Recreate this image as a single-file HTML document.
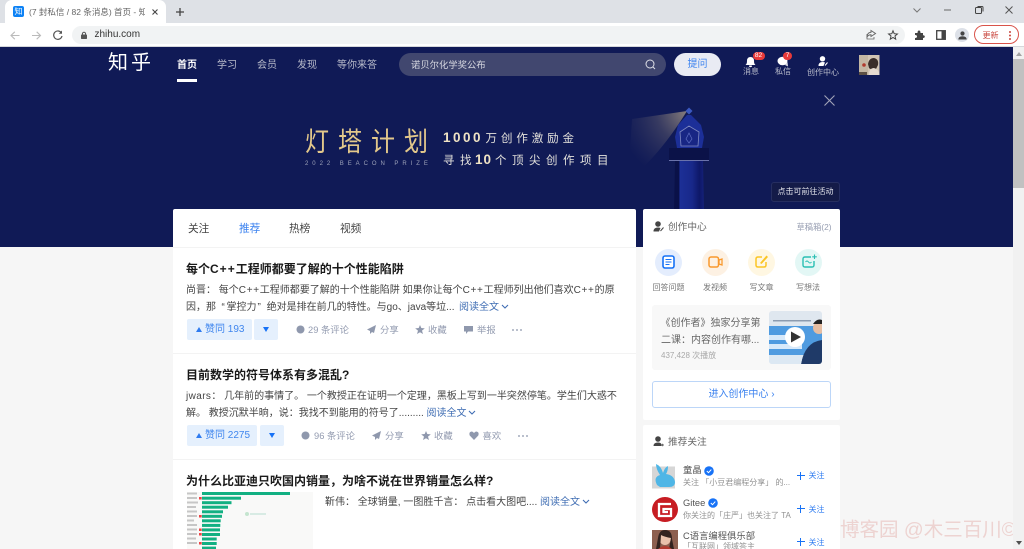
<!DOCTYPE html>
<html lang="zh"><head><meta charset="utf-8"><title>知乎</title>
<style>
*{box-sizing:border-box;margin:0;padding:0}
html,body{width:1024px;height:549px;overflow:hidden;background:#f6f6f6}
body{position:relative;font-family:"Liberation Sans","Noto Sans CJK SC",sans-serif;color:#444}
#w{position:absolute;left:0;top:0;width:1024px;height:549px;overflow:hidden;filter:blur(.3px)}
.a{position:absolute;white-space:nowrap}
svg{position:absolute;overflow:visible}
.nav{top:58px;font-size:10px;line-height:15px;color:#b9bccb}
.tab{top:222px;font-size:10.67px;line-height:15px;color:#444}
.t{font-size:12px;font-weight:700;color:#1a1a1a;line-height:18px;left:186px}
.t i{font-style:normal;letter-spacing:1px}
.p{font-size:10px;color:#444;line-height:18px}
.p i{font-style:normal;letter-spacing:.7px}
.blue{color:#3f6db3;font-size:10px;line-height:18px}
.vote{background:#e5f0fd;border-radius:2px;height:21px}
.vt{color:#3f86ee;font-size:10px;line-height:15px}
.act{font-size:9.33px;color:#939bb0;line-height:14px}
.ic{font-size:8px;color:#777;line-height:12px;text-align:center;width:40px}
.fo{font-size:8px;color:#2e7bf0;line-height:12px;left:808.500px}
.plus{left:797px;width:8px;height:8px;background:linear-gradient(#1772f6,#1772f6) center/8px 1.300px no-repeat,linear-gradient(#1772f6,#1772f6) center/1.300px 8px no-repeat}
.dots{width:2px;height:2px;border-radius:50%;background:#a5acbd;box-shadow:4px 0 #a5acbd,8px 0 #a5acbd}
</style></head><body><div id="w">
<!-- browser chrome -->
<div class="a" style="left:0;top:0;width:1024px;height:23px;background:#dee1e6"></div>
<div class="a" style="left:5px;top:0;width:161px;height:23px;background:#fff;border-radius:7px 7px 0 0"></div>
<div class="a" style="left:13px;top:6px;width:11px;height:11px;background:#0d82f5;border-radius:2px;color:#fff;font-size:8px;line-height:11px;text-align:center">知</div>
<div class="a" style="left:29px;top:5.500px;width:116px;overflow:hidden;font-size:8.500px;line-height:13px;color:#666">(7 封私信 / 82 条消息) 首页 - 知乎</div>
<svg style="left:152px;top:9px" width="6" height="6"><path d="M.5 .5L5.500 5.500M5.500 .5L.5 5.500" stroke="#444" stroke-width="1.100"/></svg>
<svg style="left:176px;top:8px" width="8" height="8"><path d="M4 0V8M0 4H8" stroke="#444" stroke-width="1.300"/></svg>
<svg style="left:913px;top:8px" width="8" height="5"><path d="M.5 .5L4 4L7.500 .5" stroke="#777" fill="none"/></svg>
<svg style="left:944px;top:9px" width="8" height="2"><path d="M0 1H7" stroke="#666" stroke-width="1"/></svg>
<svg style="left:974.500px;top:6px" width="9" height="9"><rect x=".5" y="1.500" width="6" height="6" rx="1" fill="none" stroke="#444"/><path d="M2.500 .5H7Q8 .5 8 1.500V5.500" fill="none" stroke="#444"/></svg>
<svg style="left:1005px;top:6px" width="8" height="8"><path d="M.5 .5L7.500 7.500M7.500 .5L.5 7.500" stroke="#555" stroke-width="1"/></svg>
<div class="a" style="left:0;top:23px;width:1024px;height:24px;background:#fff"></div>
<svg style="left:10px;top:30.500px" width="10" height="10"><path d="M9.500 4.500H1M4.800 .8L1 4.500L4.800 8.200" stroke="#bbb" stroke-width="1.100" fill="none"/></svg>
<svg style="left:32px;top:30.500px" width="10" height="10"><path d="M0 4.500H8.500M4.700 .8L8.500 4.500L4.700 8.200" stroke="#bbb" stroke-width="1.100" fill="none"/></svg>
<svg style="left:53px;top:30px" width="10" height="10"><path d="M8.500 3A4.200 4.200 0 1 0 9 6" stroke="#555" stroke-width="1.200" fill="none"/><path d="M9 .5V3.800H5.700Z" fill="#555"/></svg>
<div class="a" style="left:72px;top:26px;width:833px;height:18px;border-radius:9px;background:#f1f3f4"></div>
<svg style="left:81px;top:31.500px" width="6" height="7"><rect y="2.500" width="6" height="4.500" rx=".8" fill="#555"/><path d="M1.400 3V1.800A1.600 1.600 0 0 1 4.600 1.800V3" stroke="#555" fill="none"/></svg>
<div class="a" style="left:94.500px;top:28px;font-size:10px;line-height:14px;color:#333">zhihu.com</div>
<svg style="left:866px;top:30px" width="10" height="10"><path d="M5 .5L9.500 3.500L5 6.500V4.800Q2.500 4.800 1 7Q1 2.500 5 2.200Z" fill="none" stroke="#666"/><path d="M1 4V9H8V7" fill="none" stroke="#666" stroke-width=".8"/></svg>
<svg style="left:888px;top:30px" width="10" height="10"><path d="M5 .8L6.200 3.700L9.400 4L7 6L7.700 9.200L5 7.500L2.300 9.200L3 6L.6 4L3.800 3.700Z" fill="none" stroke="#444" stroke-width="1"/></svg>
<svg style="left:914px;top:30px" width="11" height="10"><path d="M1 3H3.500Q3.500 .5 5 .5Q6.500 .5 6.500 3H9V5.200Q10.800 5.200 10.800 6.500Q10.800 8 9 8V10H1V8Q3 8 3 6.500Q3 5 1 5Z" fill="#444"/></svg>
<svg style="left:936px;top:30px" width="10" height="10"><rect x=".7" y=".7" width="8.600" height="8.600" fill="none" stroke="#444" stroke-width="1.300"/><rect x="5.500" y="1" width="4" height="8" fill="#444"/></svg>
<div class="a" style="left:955px;top:28px;width:14px;height:14px;border-radius:50%;background:#dde1e8"></div>
<svg style="left:957.500px;top:30.500px" width="9" height="9"><circle cx="4.500" cy="2.500" r="2.100" fill="#444"/><path d="M.3 8.500Q.3 5.200 4.500 5.200Q8.700 5.200 8.700 8.500Z" fill="#444"/></svg>
<div class="a" style="left:974px;top:25px;width:45px;height:19px;border:1px solid #d9534a;border-radius:10px;background:#fff"></div>
<div class="a" style="left:982.500px;top:28.500px;font-size:8px;line-height:13px;color:#c9453c">更新</div>
<div class="a" style="left:1008.500px;top:31px;width:2px;height:2px;background:#c9453c;border-radius:50%;box-shadow:0 3.500px #c9453c,0 7px #c9453c"></div>
<div class="a" style="left:0;top:46px;width:1024px;height:1px;background:#d5d7db"></div>
<!-- navy -->
<div class="a" style="left:0;top:47px;width:1013px;height:200px;background:#101a56"></div>
<div class="a" style="left:108px;top:50px;font-size:20px;line-height:27px;letter-spacing:3px;color:#fff">知乎</div>
<div class="a" style="left:177px;top:58px;font-size:10px;line-height:15px;font-weight:700;color:#fff">首页</div>
<div class="a" style="left:177px;top:79px;width:20px;height:3px;background:#fff"></div>
<div class="a nav" style="left:217px">学习</div>
<div class="a nav" style="left:257px">会员</div>
<div class="a nav" style="left:297px">发现</div>
<div class="a nav" style="left:337px">等你来答</div>
<div class="a" style="left:399px;top:53px;width:267px;height:23px;border-radius:12px;background:#41476f"></div>
<div class="a" style="left:411px;top:58px;font-size:9.330px;line-height:14px;color:#d8d9e2">诺贝尔化学奖公布</div>
<svg style="left:645px;top:59px" width="11" height="11"><circle cx="5" cy="5" r="4" fill="none" stroke="#dfe0e7" stroke-width="1"/><path d="M8 8L10 10" stroke="#dfe0e7"/></svg>
<div class="a" style="left:674px;top:53px;width:47px;height:23px;border-radius:12px;background:#e9ebf3;color:#3b82ef;font-size:10px;line-height:23px;text-align:center">提问</div>
<svg style="left:745px;top:56px" width="11" height="11"><path d="M.5 9Q2 8 2 5Q2 1 5.500 1Q9 1 9 5Q9 8 10.500 9Z" fill="#fff"/><rect x="4" y="9.500" width="3" height="1.500" rx=".7" fill="#fff"/></svg>
<div class="a" style="left:752.500px;top:52px;width:12px;height:8px;border-radius:4px;background:#e83a3a;color:#fff;font-size:6.500px;line-height:8px;text-align:center">82</div>
<div class="a" style="left:743px;top:66px;font-size:8px;line-height:12px;color:#b9bccb">消息</div>
<svg style="left:777px;top:56px" width="13" height="11"><ellipse cx="5.500" cy="5" rx="5" ry="4.300" fill="#fff"/><path d="M8 9L11 10.500L10.500 6" fill="#dfe0e7"/></svg>
<div class="a" style="left:783px;top:52px;width:9px;height:8px;border-radius:4px;background:#e83a3a;color:#fff;font-size:6.500px;line-height:8px;text-align:center">7</div>
<div class="a" style="left:775px;top:66px;font-size:8px;line-height:12px;color:#b9bccb">私信</div>
<svg style="left:818px;top:56px" width="10" height="10"><circle cx="4.500" cy="2.800" r="2.700" fill="#fff"/><path d="M.5 10Q.5 6 4.500 6Q6 6 7 6.500L5.500 10Z" fill="#fff"/><path d="M7 9.500L9.500 6.500" stroke="#fff"/></svg>
<div class="a" style="left:807px;top:67px;font-size:8px;line-height:12px;color:#b9bccb">创作中心</div>
<svg style="left:858.500px;top:55px" width="20.500" height="20"><rect width="20.500" height="20" fill="#d2c5b4"/><rect width="9" height="20" fill="#c3b6a3"/><path d="M9 9Q10 3 15 3Q20 4 19 10L17 14Q12 15 10 13Z" fill="#3a2d29"/><path d="M10 20Q10 13 15 13Q20 14 20.500 20Z" fill="#e6dbd0"/><circle cx="5" cy="10" r="1.800" fill="#b03a2e"/><rect y="17" width="8" height="3" fill="#5d5044"/></svg>
<svg style="left:824px;top:95px" width="11" height="11"><path d="M.5 .5L10.500 10.500M10.500 .5L.5 10.500" stroke="#a2a5b9" stroke-width="1.100"/></svg>
<!-- banner -->
<div class="a" style="left:305px;top:128px;font-size:24px;line-height:30px;letter-spacing:9px;color:#e3c88b;transform:scaleY(1.120);transform-origin:0 50%">灯塔计划</div>
<div class="a" style="left:305px;top:160px;font-size:6px;line-height:9px;letter-spacing:3.950px;color:#9ca1b8">2022 BEACON PRIZE</div>
<div class="a" style="left:443px;top:129px;font-size:11.500px;line-height:18px;letter-spacing:3.900px;color:#e4e2dc"><b style="font-size:13.500px;letter-spacing:2.500px;color:#f0e3c4;margin-right:2.500px">1000</b>万创作激励金</div>
<div class="a" style="left:443px;top:151px;font-size:11.500px;line-height:18px;letter-spacing:5.500px;color:#e4e2dc">寻找<b style="font-size:13.500px;letter-spacing:1px;color:#f0e3c4;margin:0 3px 0 -2px">10</b>个顶尖创作项目</div>
<svg style="left:620px;top:105px" width="100" height="105">
<defs><radialGradient id="g1" gradientUnits="userSpaceOnUse" cx="68" cy="7" r="70"><stop offset="0" stop-color="#a89a88" stop-opacity=".8"/><stop offset=".45" stop-color="#8a7f78" stop-opacity=".32"/><stop offset="1" stop-color="#5a5668" stop-opacity="0"/></radialGradient>
<linearGradient id="g2" x1="0" x2="1"><stop offset="0" stop-color="#0a1148"/><stop offset=".16" stop-color="#0a1148"/><stop offset=".2" stop-color="#1c2f96"/><stop offset=".6" stop-color="#18288a"/><stop offset=".85" stop-color="#0e1868"/><stop offset="1" stop-color="#15227a"/></linearGradient></defs>
<path d="M67 6L12 14L8 76Q40 50 67 6Z" fill="url(#g1)"/>
<path d="M69 2.500L72.500 6L69 9.500L65.500 6Z" fill="#3a58c0"/>
<path d="M67 10L58 20L55 32L57 43H82L84 32L81 20L71 10Z" fill="#1c2f98"/>
<path d="M69 21L60 27L61 41H78L79 27Z" fill="#182684" stroke="#7f89c0" stroke-width=".8"/>
<path d="M69 28L66 34L69 38L72 34Z" fill="none" stroke="#5c6cc0" stroke-width=".7"/>
<rect x="49" y="43" width="40" height="12" fill="#0b1248"/>
<rect x="49" y="55" width="40" height="1" fill="#6a72ab"/>
<path d="M55 56H83L84 105H54Z" fill="url(#g2)"/>
</svg>
<div class="a" style="left:771px;top:182px;width:69px;height:20px;border-radius:3px;background:#141b48;border:1px solid #262e60;color:#e2e3ea;font-size:8px;line-height:18px;text-align:center">点击可前往活动</div>
<!-- main card -->
<div class="a" style="left:173px;top:209px;width:463px;height:340px;background:#fff;border-radius:2px 2px 0 0"></div>
<div class="a" style="left:173px;top:247px;width:463px;height:1px;background:#f3f3f3"></div>
<div class="a tab" style="left:188px">关注</div>
<div class="a tab" style="left:239px;color:#3b82ef">推荐</div>
<div class="a tab" style="left:289px">热榜</div>
<div class="a tab" style="left:340px">视频</div>
<div class="a t" style="top:260px">每个<i>C++</i>工程师都要了解的十个性能陷阱</div>
<div class="a p" style="left:186px;top:282px">尚晋： 每个<i>C++</i>工程师都要了解的十个性能陷阱 如果你让每个<i>C++</i>工程师列出他们喜欢<i>C++</i>的原</div>
<div class="a p" style="left:186px;top:299px">因，那</div>
<div class="a p" style="left:221.500px;top:299px">“</div>
<div class="a p" style="left:226.500px;top:299px">掌控力</div>
<div class="a p" style="left:257.500px;top:299px">”</div>
<div class="a p" style="left:266.700px;top:299px">绝对是排在前几的特性。与go、java等垃...</div>
<div class="a blue" style="left:459px;top:299px">阅读全文</div>
<svg style="left:500.500px;top:303.500px" width="8" height="6"><path d="M1 1L4 4L7 1" stroke="#3f6db3" stroke-width="1.100" fill="none"/></svg>
<div class="a vote" style="left:187px;top:319px;width:65px"></div>
<svg style="left:196px;top:326.500px" width="6" height="5"><path d="M3 0L6 5H0Z" fill="#2e7bf0"/></svg>
<div class="a vt" style="left:205px;top:322px">赞同 193</div>
<div class="a vote" style="left:254px;top:319px;width:24px"></div>
<svg style="left:263px;top:327px" width="6" height="5"><path d="M0 0H6L3 5Z" fill="#1772f6"/></svg>
<svg style="left:295.500px;top:325px" width="9" height="9"><circle cx="4.500" cy="4.500" r="4" fill="#8f98ad"/></svg>
<div class="a act" style="left:308px;top:323px">29 条评论</div>
<svg style="left:367px;top:325px" width="9" height="9"><path d="M9 0L0 4.500L3 6L3 9L5 7L7 8Z" fill="#8f98ad"/></svg>
<div class="a act" style="left:380px;top:323px">分享</div>
<svg style="left:415px;top:325px" width="10" height="9"><path d="M5 0L6.300 3L9.800 3.400L7 5.600L8 9L5 7.300L2 9L3 5.600L.2 3.400L3.700 3Z" fill="#8f98ad"/></svg>
<div class="a act" style="left:428px;top:323px">收藏</div>
<svg style="left:464px;top:325px" width="9" height="9"><path d="M0 1H9V6.500H4L2 9V6.500H0Z" fill="#8f98ad"/></svg>
<div class="a act" style="left:477px;top:323px">举报</div>
<div class="a dots" style="left:512px;top:328.500px"></div>
<div class="a" style="left:173px;top:353px;width:463px;height:1px;background:#f3f3f3"></div>
<div class="a t" style="top:366px">目前数学的符号体系有多混乱?</div>
<div class="a p" style="left:186px;top:388px"><span style="letter-spacing:.4px">jwars</span>： 几年前的事情了。 一个教授正在证明一个定理，黑板上写到一半突然停笔。学生们大惑不</div>
<div class="a p" style="left:186px;top:405px">解。 教授沉默半晌，说：我找不到能用的符号了.........</div>
<div class="a blue" style="left:426.500px;top:405px">阅读全文</div>
<svg style="left:467.500px;top:409.500px" width="8" height="6"><path d="M1 1L4 4L7 1" stroke="#3f6db3" stroke-width="1.100" fill="none"/></svg>
<div class="a vote" style="left:187px;top:425px;width:70px"></div>
<svg style="left:196px;top:432.500px" width="6" height="5"><path d="M3 0L6 5H0Z" fill="#2e7bf0"/></svg>
<div class="a vt" style="left:205px;top:428px">赞同 2275</div>
<div class="a vote" style="left:260px;top:425px;width:24px"></div>
<svg style="left:269px;top:433px" width="6" height="5"><path d="M0 0H6L3 5Z" fill="#1772f6"/></svg>
<svg style="left:300.500px;top:431px" width="9" height="9"><circle cx="4.500" cy="4.500" r="4" fill="#8f98ad"/></svg>
<div class="a act" style="left:314px;top:429px">96 条评论</div>
<svg style="left:372px;top:431px" width="9" height="9"><path d="M9 0L0 4.500L3 6L3 9L5 7L7 8Z" fill="#8f98ad"/></svg>
<div class="a act" style="left:385px;top:429px">分享</div>
<svg style="left:420.500px;top:431px" width="10" height="9"><path d="M5 0L6.300 3L9.800 3.400L7 5.600L8 9L5 7.300L2 9L3 5.600L.2 3.400L3.700 3Z" fill="#8f98ad"/></svg>
<div class="a act" style="left:434px;top:429px">收藏</div>
<svg style="left:469px;top:431px" width="10" height="9"><path d="M5 9L.7 4.500Q-.5 1 2.500 .5Q4 .5 5 2Q6 .5 7.500 .5Q10.500 1 9.300 4.500Z" fill="#8f98ad"/></svg>
<div class="a act" style="left:482.500px;top:429px">喜欢</div>
<div class="a dots" style="left:517.500px;top:434.500px"></div>
<div class="a" style="left:173px;top:459px;width:463px;height:1px;background:#f3f3f3"></div>
<div class="a t" style="top:472px">为什么比亚迪只吹国内销量，为啥不说在世界销量怎么样?</div>
<div class="a" style="left:186.500px;top:491.500px;width:126.500px;height:57.500px;background:#f9f9f8"></div>
<svg style="left:186px;top:492px" width="127" height="57"><g fill="#12b082"><rect x="16" y="0" width="88" height="3"/><rect x="16" y="4.700" width="39" height="3"/><rect x="16" y="9.200" width="29.500" height="3"/><rect x="16" y="13.700" width="26" height="3"/><rect x="16" y="18.300" width="21" height="3"/><rect x="16" y="22.800" width="20" height="3"/><rect x="16" y="27.300" width="18.700" height="3"/><rect x="16" y="31.900" width="18.300" height="3"/><rect x="16" y="36.400" width="18" height="3"/><rect x="16" y="41" width="18" height="3"/><rect x="16" y="45.500" width="14.700" height="3"/><rect x="16" y="50" width="14.700" height="3"/><rect x="16" y="54.600" width="14" height="2.400"/></g><g fill="#c6c6c6"><rect x="1" y=".5" width="10" height="2"/><rect x="1" y="5" width="10" height="2"/><rect x="1" y="9.500" width="11" height="2"/><rect x="1" y="14" width="9" height="2"/><rect x="1" y="18.500" width="10" height="2"/><rect x="1" y="23" width="10" height="2"/><rect x="1" y="27.500" width="7" height="2"/><rect x="1" y="32" width="10" height="2"/><rect x="1" y="36.500" width="10" height="2"/><rect x="1" y="41" width="10" height="2"/><rect x="1" y="45.500" width="9" height="2"/><rect x="1" y="50" width="10" height="2"/></g><g fill="#e44"><rect x="13" y="5" width="2.700" height="2.500"/><rect x="13" y="23" width="2.700" height="2.500"/><rect x="13" y="36.500" width="2.700" height="2.500"/><rect x="13" y="41" width="2.700" height="2.500"/><rect x="13" y="50" width="2.700" height="2.500"/></g><circle cx="61" cy="22" r="2" fill="#c5e5cf"/><rect x="64" y="21" width="16" height="2" fill="#d8ebe4"/></svg>
<div class="a p" style="left:325px;top:494px">靳伟： 全球销量, 一图胜千言： 点击看大图吧....</div>
<div class="a blue" style="left:540px;top:494px">阅读全文</div>
<svg style="left:581.500px;top:498.500px" width="8" height="6"><path d="M1 1L4 4L7 1" stroke="#3f6db3" stroke-width="1.100" fill="none"/></svg>
<!-- creation card -->
<div class="a" style="left:643px;top:209px;width:197px;height:211px;background:#fff;border-radius:2px"></div>
<svg style="left:653px;top:221px" width="11" height="11"><circle cx="5" cy="3" r="2.800" fill="#444"/><path d="M.5 10.500Q.5 6.500 5 6.500Q6.500 6.500 7.500 7L6 10.500Z" fill="#444"/><path d="M7.500 10L10.500 6.500" stroke="#444"/></svg>
<div class="a" style="left:668px;top:220.500px;font-size:9.700px;line-height:14px;color:#666">创作中心</div>
<div class="a" style="left:796.500px;top:221px;font-size:8.300px;line-height:12px;color:#979eb2">草稿箱(2)</div>
<div class="a" style="left:655px;top:249px;width:27px;height:27px;border-radius:50%;background:#e4edfd"></div>
<div class="a" style="left:702px;top:249px;width:27px;height:27px;border-radius:50%;background:#fdf1e3"></div>
<div class="a" style="left:748px;top:249px;width:27px;height:27px;border-radius:50%;background:#fff7e2"></div>
<div class="a" style="left:795px;top:249px;width:27px;height:27px;border-radius:50%;background:#e3f7f5"></div>
<svg style="left:662px;top:255px" width="13" height="14"><rect x="1" y="1" width="11" height="12" rx="2" fill="#fff" stroke="#1772f6" stroke-width="1.600"/><path d="M3.500 4.500H9.500M3.500 7H9.500M3.500 9.500H7.500" stroke="#1772f6" stroke-width="1.100"/></svg>
<svg style="left:708px;top:256px" width="15" height="12"><rect x="1" y="1" width="9.500" height="10" rx="2" fill="none" stroke="#f9992e" stroke-width="1.500"/><path d="M11 4L14 3V9L11 8Z" fill="none" stroke="#f9992e" stroke-width="1.300"/></svg>
<svg style="left:755px;top:254px" width="14" height="14"><path d="M7 3H3Q1 3 1 5V11Q1 13 3 13H9Q11 13 11 11V8" fill="none" stroke="#fbc524" stroke-width="1.500"/><path d="M5 9L11.500 1.500L13 3L6.500 10Z" fill="#fbc524"/></svg>
<svg style="left:802px;top:254px" width="15" height="14"><path d="M9 3H3Q1 3 1 5V11Q1 13 3 13H10Q12 13 12 11V7" fill="none" stroke="#2abfb3" stroke-width="1.400"/><path d="M12.500 .5V5M10.200 2.800H14.800" stroke="#2abfb3" stroke-width="1.100"/><path d="M3.500 8Q5 6 6.500 8Q8 10 9.500 8" fill="none" stroke="#2abfb3"/></svg>
<div class="a ic" style="left:648.500px;top:282px">回答问题</div>
<div class="a ic" style="left:695px;top:282px">发视频</div>
<div class="a ic" style="left:741.500px;top:282px">写文章</div>
<div class="a ic" style="left:788px;top:282px">写想法</div>
<div class="a" style="left:652px;top:305px;width:179px;height:65px;background:#f8f8f8;border-radius:3px"></div>
<div class="a" style="left:660.500px;top:314.500px;font-size:10px;line-height:17px;color:#666">《创作者》独家分享第</div>
<div class="a" style="left:661px;top:331.500px;font-size:10px;line-height:17px;color:#666">二课：内容创作有哪...</div>
<div class="a" style="left:661px;top:350px;font-size:8px;line-height:12px;color:#a8a8a8">437,428 次播放</div>
<svg style="left:769px;top:311px" width="53" height="53"><defs><clipPath id="c"><rect width="53" height="53" rx="3"/></clipPath></defs><g clip-path="url(#c)"><rect width="53" height="53" fill="#dfe7ef"/><rect x="4" y="9" width="38" height="1.500" fill="#8d9cb0"/><rect y="15" width="53" height="29" fill="#4f9be0"/><rect x="0" y="24" width="33" height="5" fill="#d7e9fa"/><rect x="0" y="33" width="33" height="5" fill="#d7e9fa"/><circle cx="50" cy="17" r="6" fill="#e5bda2"/><path d="M44 13Q48 7 53 9V13Z" fill="#222"/><path d="M32 53Q36 31 53 29V53Z" fill="#1f3a68"/><path d="M0 44H34L32 53H0Z" fill="#dce8f3"/></g><circle cx="26" cy="26" r="10" fill="#fff"/><path d="M22 20.500L32 26L22 31.500Z" fill="#333"/></svg>
<div class="a" style="left:652px;top:380.500px;width:179px;height:27px;border:1px solid #bcd6f8;border-radius:3px;color:#3b82ef;font-size:10px;line-height:25px;text-align:center">进入创作中心 ›</div>
<!-- follow card -->
<div class="a" style="left:643px;top:425px;width:197px;height:124px;background:#fff;border-radius:2px 2px 0 0"></div>
<svg style="left:653px;top:436px" width="11" height="11"><circle cx="5" cy="3" r="2.800" fill="#444"/><path d="M.5 10Q.5 6.500 5 6.500Q8 6.500 8.500 8.500V10Z" fill="#444"/><path d="M8.500 9H11M9.700 7.800V10.200" stroke="#444" stroke-width=".7"/></svg>
<div class="a" style="left:668px;top:435.500px;font-size:9.700px;line-height:14px;color:#666">推荐关注</div>
<svg style="left:652px;top:463px" width="26" height="26"><rect y="3.500" width="23" height="22" fill="#d6d6d6"/><path d="M5 22Q1 14 8 12Q4 6 4 1Q9 3 11 10Q13 4 16 3Q16 8 14 11Q22 12 23 19Q23 24 17 24H8Z" fill="#4fb6e6"/></svg>
<div class="a" style="left:683px;top:464px;font-size:9.330px;line-height:13px;color:#555">童晶</div>
<svg style="left:704px;top:465.500px" width="10" height="10"><circle cx="5" cy="5" r="4.800" fill="#1772f6"/><path d="M2.800 5L4.500 6.700L7.300 3.600" stroke="#fff" fill="none"/></svg>
<div class="a" style="left:683px;top:477px;font-size:8px;line-height:12px;color:#919191">关注 「小豆君编程分享」 的...</div>
<div class="a plus" style="top:472px"></div><div class="a fo" style="top:470px">关注</div>
<div class="a" style="left:652px;top:496.500px;width:26px;height:25.500px;border-radius:50%;background:#c71d23"></div>
<svg style="left:657px;top:501.500px" width="16" height="16"><path d="M14 2H2V14H14V7H6.500V10H11" fill="none" stroke="#fff" stroke-width="2.300"/></svg>
<div class="a" style="left:683px;top:497px;font-size:9.330px;line-height:13px;color:#555">Gitee</div>
<svg style="left:708px;top:498px" width="10" height="10"><circle cx="5" cy="5" r="4.800" fill="#1772f6"/><path d="M2.800 5L4.500 6.700L7.300 3.600" stroke="#fff" fill="none"/></svg>
<div class="a" style="left:683px;top:510px;font-size:8px;line-height:12px;color:#919191">你关注的「庄严」也关注了 TA</div>
<div class="a plus" style="top:505px"></div><div class="a fo" style="top:503.500px">关注</div>
<svg style="left:652px;top:530px" width="26" height="19"><rect width="26" height="19" fill="#8d5f4f"/><ellipse cx="13" cy="8" rx="6" ry="7" fill="#e9c1ab"/><path d="M6 8Q7 0 13 0Q20 0 20 9L22 19H17L19 8Q13 7 9 5L8 19H4Z" fill="#33231f"/><path d="M6 19Q13 13 20 19Z" fill="#b33b30"/></svg>
<div class="a" style="left:683px;top:530px;font-size:9.330px;line-height:13px;color:#555">C语言编程俱乐部</div>
<div class="a" style="left:683px;top:541px;font-size:8px;line-height:12px;color:#919191">「互联网」领域答主</div>
<div class="a plus" style="top:538px"></div><div class="a fo" style="top:536.500px">关注</div>
<!-- watermark -->
<div class="a" style="left:840px;top:517.500px;font-size:19.500px;line-height:25px;color:#edd3d1">博客园 @木三百川©</div>
<!-- scrollbar -->
<div class="a" style="left:1013px;top:47px;width:11px;height:502px;background:#f1f1f1"></div>
<div class="a" style="left:1013px;top:59px;width:11px;height:129px;background:#c1c1c1"></div>
<svg style="left:1015.500px;top:52px" width="6" height="4"><path d="M3 0L6 4H0Z" fill="#a3a3a3"/></svg>
<svg style="left:1015.500px;top:541px" width="6" height="4"><path d="M3 4L6 0H0Z" fill="#505050"/></svg>
</div></body></html>
